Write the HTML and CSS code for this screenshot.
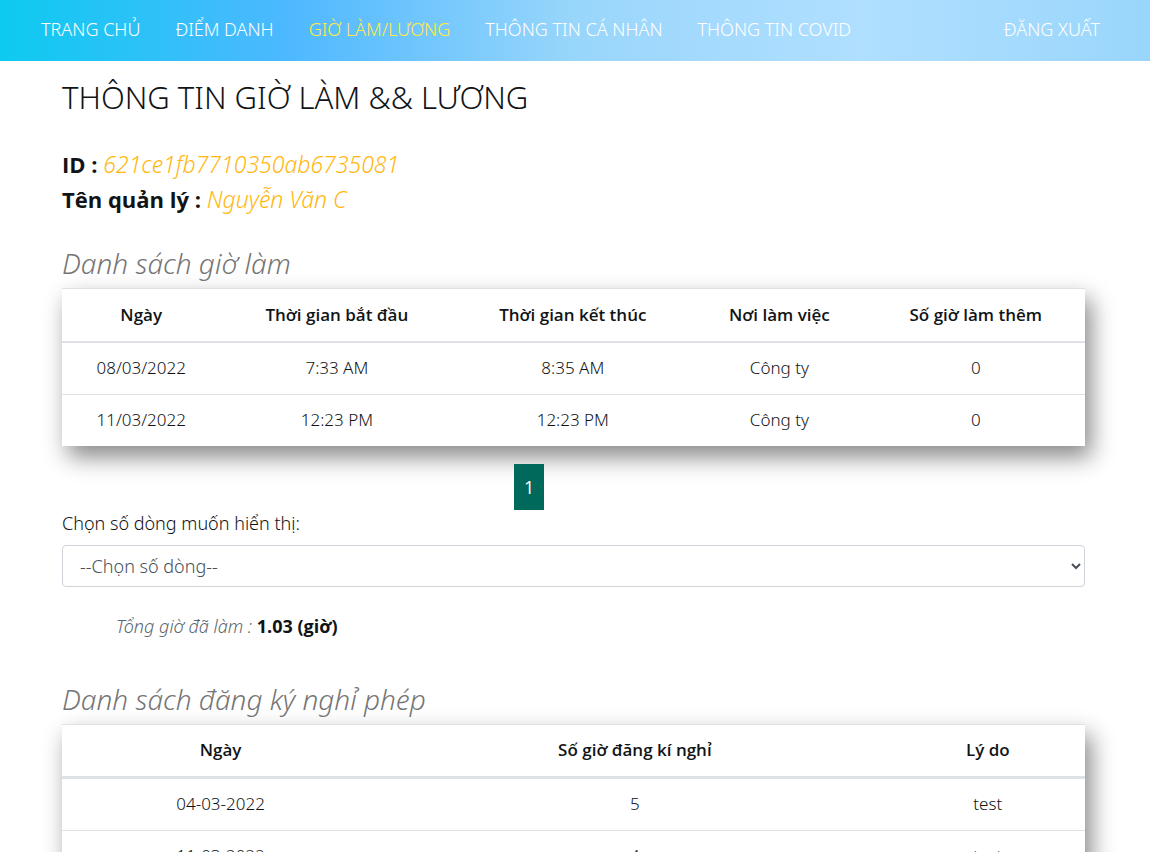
FILE: index.html
```html
<!DOCTYPE html>
<html lang="vi">
<head>
<meta charset="utf-8">
<meta name="viewport" content="width=device-width, initial-scale=1">
<title>Thông tin giờ làm &amp; lương</title>
<link rel="stylesheet" href="styles.css">
</head>
<body>
<nav class="navbar">
  <a class="nav-link" href="#">TRANG CHỦ</a>
  <a class="nav-link" href="#">ĐIỂM DANH</a>
  <a class="nav-link active" href="#">GIỜ LÀM/LƯƠNG</a>
  <a class="nav-link" href="#">THÔNG TIN CÁ NHÂN</a>
  <a class="nav-link" href="#">THÔNG TIN COVID</a>
  <a class="nav-link logout" href="#">ĐĂNG XUẤT</a>
</nav>
<main class="content">
  <h1 class="page-title">THÔNG TIN GIỜ LÀM &amp;&amp; LƯƠNG</h1>
  <div class="profile">
    <div><b>ID :</b> <i>621ce1fb7710350ab6735081</i></div>
    <div><b>Tên quản lý :</b> <i>Nguyễn Văn C</i></div>
  </div>

  <h2 class="section-title">Danh sách giờ làm</h2>
  <table class="table">
    <thead>
      <tr><th>Ngày</th><th>Thời gian bắt đầu</th><th>Thời gian kết thúc</th><th>Nơi làm việc</th><th>Số giờ làm thêm</th></tr>
    </thead>
    <tbody>
      <tr><td>08/03/2022</td><td>7:33 AM</td><td>8:35 AM</td><td>Công ty</td><td>0</td></tr>
      <tr><td>11/03/2022</td><td>12:23 PM</td><td>12:23 PM</td><td>Công ty</td><td>0</td></tr>
    </tbody>
  </table>
  <div class="pagination"><button class="page-button" type="button">1</button></div>
  <label class="row-label" for="row-count">Chọn số dòng muốn hiển thị:</label>
  <select class="row-select" id="row-count">
    <option>--Chọn số dòng--</option>
    <option>5</option>
    <option>10</option>
  </select>
  <p class="total"><i>Tổng giờ đã làm :</i> <b>1.03 (giờ)</b></p>

  <h2 class="section-title">Danh sách đăng ký nghỉ phép</h2>
  <table class="table table-leave">
    <colgroup><col class="col-leave-date"><col class="col-leave-hours"><col></colgroup>
    <thead>
      <tr><th>Ngày</th><th>Số giờ đăng kí nghỉ</th><th>Lý do</th></tr>
    </thead>
    <tbody>
      <tr><td>04-03-2022</td><td>5</td><td>test</td></tr>
      <tr><td>11-03-2022</td><td>4</td><td>test</td></tr>
    </tbody>
  </table>
</main>
</body>
</html>
```
FILE: styles.css
```css
* { box-sizing: border-box; }
html { height: 100%; overflow: hidden; }
body {
  height: 100%;
  margin: 0;
  overflow: auto;
  scrollbar-width: none;
  background: #fff;
  color: #111416;
  font-family: "Noto Sans", "Open Sans", sans-serif;
  font-size: 18px;
  font-weight: 300;
  line-height: 26px;
}
b { font-family: "Open Sans", sans-serif; font-weight: 700; }
.navbar {
  display: flex;
  gap: 35px;
  padding: 16px 50px 19px 41px;
  background: linear-gradient(90deg, #0dcaf0, #4db8ff, #99d6fb, #b0dfff, #99d6fb);
}
.nav-link {
  color: #fff;
  text-decoration: none;
  white-space: nowrap;
}
.nav-link.active { color: #ffeb3b; }
.logout { margin-left: auto; }
.content { padding: 16px 65px 40px 62px; }
.page-title {
  margin: 0;
  font-size: 31px;
  font-weight: 300;
  line-height: 40px;
}
.profile {
  margin: 30px 0 28px;
  font-size: 22px;
  line-height: 35px;
}
.profile i { color: #ffb70f; font-size: 23px; }
.section-title {
  margin: 0;
  padding-bottom: 7px;
  color: #757575;
  font-size: 28px;
  font-style: italic;
  font-weight: 300;
  line-height: 36px;
}
.table {
  width: 100%;
  border-collapse: collapse;
  background: #fff;
  box-shadow: 6px 11px 22px #888;
  font-size: 17px;
  line-height: 25px;
  text-align: center;
}
.table th, .table td {
  padding: 12px 12px 14px;
  border-top: 1px solid #dee2e6;
}
.table th { font-family: "Open Sans", sans-serif; font-weight: 600; }
.table thead th { padding: 13px 12px 14px; border-bottom: 2px solid #dee2e6; }
.table-leave { table-layout: fixed; }
.table-leave thead th { padding: 12px 12px 14px; border-bottom-width: 3px; }
.col-leave-date { width: 31%; }
.col-leave-hours { width: 50%; }
.pagination { padding: 18px 0 0 452px; }
.page-button {
  padding: 11px 10px;
  border: 0;
  background: #00695c;
  color: #fff;
  font: 400 18px/24px "Open Sans", sans-serif;
}
.row-label { display: block; margin-bottom: 9px; }
.row-select {
  display: block;
  width: 100%;
  height: 42px;
  padding: 6px 11px 6px 13px;
  border: 1px solid #ced4da;
  border-radius: 4px;
  background: #fff;
  color: #495057;
  font: inherit;
}
.total { margin: 26px 0 42px 54px; }
.total i { color: #5c656d; }
```
